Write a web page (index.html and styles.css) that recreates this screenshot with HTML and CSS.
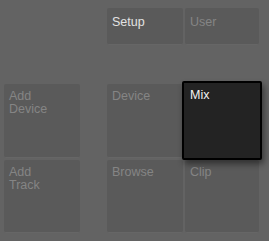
FILE: index.html
```html
<!DOCTYPE html>
<html lang="en">
<head>
    <meta charset="UTF-8">
    <title>Push Mode Buttons</title>
    <link rel="stylesheet" href="styles.css">
</head>
<body>

    <div class="pad-grid">
        <!-- Top row: small buttons -->
        <div class="pad top active setup">Setup</div>
        <div class="pad top user">User</div>

        <!-- Left column -->
        <div class="pad add-device">Add<br>Device</div>
        <div class="pad add-track">Add<br>Track</div>

        <!-- Mode buttons -->
        <div class="pad device">Device</div>
        <div class="pad browse">Browse</div>
        <div class="pad clip">Clip</div>

        <!-- Pressed button sits over the grid -->
        <div class="pad mix">Mix</div>
    </div>

</body>
</html>
```

FILE: styles.css
```css
/* Basic reset */
* {
    margin: 0;
    padding: 0;
    box-sizing: border-box;
}

body {
    background: #636363;
    font-family: "Liberation Sans", Arial, sans-serif;
    width: 269px;
    height: 241px;
    overflow: hidden;
}

/* Grid of buttons, spacer tracks keep the gaps */
.pad-grid {
    display: grid;
    grid-template-columns: 76px 23px 76px 74px;
    grid-template-rows: 37px 35px 74px 73px;
    gap: 2px;
    padding: 8px 0 0 4px;
}

.pad {
    background: #5a5a5a;
    border-radius: 2px;
    border-bottom: 1px solid #666;
    color: #858585;
    font-size: 12.5px;
    line-height: 13px;
    padding: 6px 5px;
}

.top {
    grid-row: 1;
    padding-top: 8px;
}

.active {
    color: #e2e2e2;
}

.setup { grid-column: 3; }
.user { grid-column: 4; }

.add-device { grid-row: 3; grid-column: 1; }
.add-track { grid-row: 4; grid-column: 1; }
.device { grid-row: 3; grid-column: 3; }
.browse { grid-row: 4; grid-column: 3; }
.clip { grid-row: 4; grid-column: 4; }

/* Pressed Mix button, raised over its neighbours */
.mix {
    grid-row: 3;
    grid-column: 4;
    margin: -3px -3px -2px -3px;
    background: #232323;
    border: 2px solid #000;
    border-radius: 2px;
    color: #f2f2f2;
    padding: 6px 6px;
    box-shadow: 2px 4px 6px rgba(0, 0, 0, 0.45);
    position: relative;
    z-index: 1;
}
```
